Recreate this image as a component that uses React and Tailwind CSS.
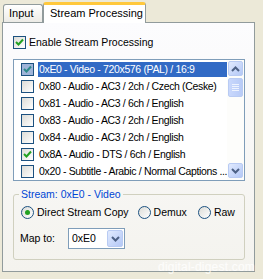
const ROWS = [
  { id: 'e0', label: '0xE0 - Video - 720x576 (PAL) / 16:9', checked: true, selected: true },
  { id: '80', label: '0x80 - Audio - AC3 / 2ch / Czech (Ceske)' },
  { id: '81', label: '0x81 - Audio - AC3 / 6ch / English' },
  { id: '83', label: '0x83 - Audio - AC3 / 2ch / English' },
  { id: '84', label: '0x84 - Audio - AC3 / 2ch / English' },
  { id: '8a', label: '0x8A - Audio - DTS / 6ch / English', checked: true },
  { id: '20', label: '0x20 - Subtitle - Arabic / Normal Captions ...' },
]

const FONT = "font-['Liberation_Sans',Arial,sans-serif]"

function Check({ checked, hot }) {
  return (
    <span className={`w-[13px] h-[13px] shrink-0 border border-[#1C5180] flex items-center justify-center ${hot ? 'bg-[#9fb4d8]' : 'bg-gradient-to-br from-[#dcdcd7] to-white'}`}>
      {checked && (
        <svg width="9" height="9" viewBox="0 0 9 9">
          <path d="M1 4 L3.5 6.5 L8 1.5" fill="none" stroke={hot ? '#2d8a8a' : '#21a121'} strokeWidth="2" />
        </svg>
      )}
    </span>
  )
}

function Radio({ checked, label }) {
  return (
    <div className="flex items-center gap-[3px] whitespace-nowrap">
      <span className="w-[13px] h-[13px] shrink-0 rounded-full border border-[#1C5180] bg-gradient-to-br from-[#dcdcd7] to-white flex items-center justify-center">
        {checked && <span className="w-[5px] h-[5px] rounded-full bg-[#21a121]" />}
      </span>
      <span>{label}</span>
    </div>
  )
}

function Arrow({ up }) {
  return (
    <svg width="9" height="6" viewBox="0 0 9 6">
      <path d={up ? 'M1 5 L4.5 1.5 L8 5' : 'M1 1 L4.5 4.5 L8 1'} fill="none" stroke="#4d6185" strokeWidth="2" />
    </svg>
  )
}

function ScrollBtn({ children, className = '' }) {
  return (
    <div className={`h-[15px] rounded-[2px] border border-[#b9cbf3] bg-gradient-to-br from-[#e1eafe] to-[#b4c8f6] flex items-center justify-center ${className}`}>
      {children}
    </div>
  )
}

export default function App() {
  return (
    <div className={`relative w-[263px] h-[279px] bg-[#ECE9D8] text-[10.5px] text-black ${FONT}`}>
      {/* tabs */}
      <div className="flex items-end h-[22px] pl-[3px]">
        <div className="w-[40px] h-[18px] border border-b-0 border-[#919B9C] rounded-t-[3px] bg-gradient-to-b from-white to-[#ecebe6] pl-[5px] leading-[17px] text-[11px]">
          Input
        </div>
        <div className="relative z-10 w-[103px] h-[21px] -mb-px border-x border-[#919B9C] bg-white rounded-t-[3px] border-t-[3px] border-t-[#ffc83c] pl-[6px] leading-[16px] text-[11px]">
          Stream Processing
        </div>
      </div>

      {/* tab page */}
      <div className="ml-[2px] w-[253px] h-[250px] border border-[#919B9C] bg-gradient-to-b from-[#fcfcfe] to-[#f4f3ee] px-[10px] pt-[13px]">
        <div className="flex items-center gap-[3px] h-[13px]">
          <Check checked />
          <span>Enable Stream Processing</span>
        </div>

        {/* stream list */}
        <div className="mt-[10px] w-[232px] h-[122px] border border-[#7F9DB9] bg-white flex">
          <div className="flex-1 min-w-0 pt-[1px] tracking-[-0.35px]">
            {ROWS.map(r => (
              <div key={r.id} className="flex items-center h-[17px] pl-[7px]">
                <Check checked={r.checked} hot={r.selected} />
                <span className={`ml-[4px] pl-[1px] flex-1 min-w-0 h-[15px] leading-[15px] whitespace-nowrap overflow-hidden ${r.selected ? 'bg-[#316AC5] text-white' : ''}`}>
                  {r.label}
                </span>
              </div>
            ))}
          </div>
          <div className="w-[17px] shrink-0 flex flex-col px-[1px] pt-[1px] pb-[2px] bg-[#fdfdfb]">
            <ScrollBtn><Arrow up /></ScrollBtn>
            <div className="mt-[2px] h-[19px] rounded-[2px] border border-[#b9cbf3] bg-gradient-to-r from-[#c9d8fc] to-[#b8cbf7] flex flex-col items-center justify-center gap-[1px]">
              <span className="w-[7px] h-px bg-[#eef3fe]" />
              <span className="w-[7px] h-px bg-[#eef3fe]" />
              <span className="w-[7px] h-px bg-[#eef3fe]" />
              <span className="w-[7px] h-px bg-[#eef3fe]" />
            </div>
            <div className="flex-1" />
            <ScrollBtn><Arrow /></ScrollBtn>
          </div>
        </div>

        {/* stream group */}
        <fieldset className="mt-[7px] w-[232px] h-[72px] border border-[#d0d0bf] rounded-[3px] px-[7px]">
          <legend className="px-[2px] -ml-[2px] text-[#0046D5] leading-[13px]">Stream: 0xE0 - Video</legend>
          <div className="flex items-center h-[13px] mt-[5px]">
            <Radio checked label="Direct Stream Copy" />
            <div className="ml-[9px]"><Radio label="Demux" /></div>
            <div className="ml-[11px]"><Radio label="Raw" /></div>
          </div>
          <div className="flex items-center mt-[9px]">
            <span className="-ml-px w-[48px]">Map to:</span>
            <div className="w-[57px] h-[21px] border border-[#7F9DB9] bg-white flex items-center">
              <span className="flex-1 pl-[3px]">0xE0</span>
              <ScrollBtn className="w-[16px] h-[17px] mr-px"><Arrow /></ScrollBtn>
            </div>
          </div>
        </fieldset>
      </div>

      <span className="absolute right-[8px] bottom-[3px] text-[12px] text-white/80 tracking-[0.2px]">digital-digest.com</span>
    </div>
  )
}
